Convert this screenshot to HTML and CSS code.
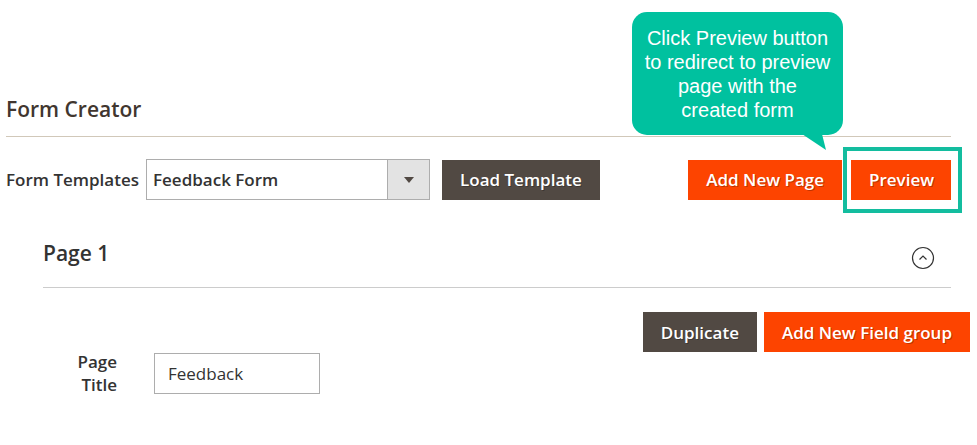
FILE: index.html
```html
<!DOCTYPE html>
<html lang="en">
<head>
  <meta charset="UTF-8" />
  <title>Form Creator</title>
  <link rel="stylesheet" href="styles.css">
</head>
<body>
  <div class="container">
    <h1 class="title">Form Creator</h1>

    <div class="toolbar">
      <label class="toolbar-label">Form Templates</label>
      <div class="select">
        <span class="select-value">Feedback Form</span>
        <span class="select-arrow"></span>
      </div>
      <button class="btn btn-dark">Load Template</button>
      <div class="spacer"></div>
      <button class="btn btn-orange">Add New Page</button>
      <div class="preview-wrap">
        <button class="btn btn-orange">Preview</button>
        <div class="highlight"></div>
      </div>
    </div>

    <section class="page-section">
      <div class="page-head">
        <h2>Page 1</h2>
        <svg class="collapse" width="24" height="24" viewBox="0 0 24 24">
          <circle cx="12" cy="12" r="10.5" fill="none" stroke="#333" stroke-width="1.2"/>
          <path d="M8.5 13.5 L12 10 L15.5 13.5" fill="none" stroke="#333" stroke-width="1.2"/>
        </svg>
      </div>

      <div class="page-actions">
        <button class="btn btn-dark">Duplicate</button>
        <button class="btn btn-orange">Add New Field group</button>
      </div>

      <div class="field">
        <label class="field-label">Page<br>Title</label>
        <input class="field-input" type="text" value="Feedback">
      </div>
    </section>
  </div>

  <div class="tip">
    Click Preview button<br>to redirect to preview<br>page with the<br>created form
    <svg class="tip-tail" width="30" height="20" viewBox="0 0 30 20">
      <polygon points="0,0 20,0 24,16" fill="#00c19f"/>
    </svg>
  </div>
</body>
</html>
```
FILE: styles.css
```css
* {
  margin: 0;
  padding: 0;
  box-sizing: border-box;
}
body {
  font-family: 'Open Sans', sans-serif;
  color: #333;
  background: #fff;
  width: 977px;
  height: 445px;
  overflow: hidden;
  position: relative;
}
.container {
  margin-left: 6px;
  width: 945px;
}
.title {
  font-size: 21px;
  font-weight: 600;
  line-height: 28px;
  color: #41362f;
  padding-top: 95px;
  padding-bottom: 13px;
  border-bottom: 1px solid #d1c8b9;
}
.toolbar {
  display: flex;
  align-items: center;
  margin-top: 22px;
  height: 41px;
}
.toolbar-label {
  font-size: 17px;
  font-weight: 600;
  color: #333;
  margin-right: 7px;
}
.select {
  display: flex;
  align-items: stretch;
  width: 284px;
  height: 41px;
  border: 1px solid #adadad;
  margin-right: 12px;
}
.select-value {
  flex: 1;
  display: flex;
  align-items: center;
  padding-left: 6px;
  font-size: 17px;
  font-weight: 600;
  color: #333;
}
.select-arrow {
  width: 42px;
  background: #e3e3e3;
  border-left: 1px solid #adadad;
  position: relative;
}
.select-arrow::after {
  content: "";
  position: absolute;
  left: 16px;
  top: 17px;
  border: 5px solid transparent;
  border-top: 6px solid #514943;
  border-bottom: 0;
}
.btn {
  font-family: 'Open Sans', sans-serif;
  font-size: 17px;
  font-weight: 600;
  color: #fff;
  border: 0;
  height: 40px;
  padding: 0 18px;
  text-shadow: 1px 1px 0 rgba(0, 0, 0, 0.25);
  cursor: pointer;
}
.btn-dark {
  background: #514943;
}
.btn-orange {
  background: #fd4400;
}
.spacer {
  flex: 1;
}
.preview-wrap {
  position: relative;
  margin-left: 9px;
}
.preview-wrap .btn {
  width: 100px;
  display: block;
}
.highlight {
  position: absolute;
  top: -13px;
  left: -8px;
  right: -11px;
  bottom: -13px;
  border: 4px solid #13bd9f;
}
.page-section {
  margin-left: 37px;
}
.page-head {
  display: flex;
  justify-content: space-between;
  align-items: flex-start;
  margin-top: 39px;
  padding-bottom: 17px;
  border-bottom: 1px solid #ccc;
}
.page-head h2 {
  font-size: 21px;
  font-weight: 600;
  line-height: 28px;
  color: #333;
}
.collapse {
  margin-top: 7px;
  margin-right: 16px;
}
.page-actions {
  display: flex;
  justify-content: flex-end;
  gap: 7px;
  margin-top: 24px;
  margin-right: -19px;
}
.field {
  display: flex;
  align-items: center;
  margin-top: -2px;
}
.field-label {
  width: 74px;
  text-align: right;
  font-size: 17px;
  font-weight: 600;
  line-height: 23px;
  color: #333;
  margin-right: 37px;
}
.field-input {
  width: 166px;
  height: 41px;
  border: 1px solid #adadad;
  padding-left: 13px;
  font-family: 'Open Sans', sans-serif;
  font-size: 17px;
  color: #333;
}
.tip {
  position: absolute;
  left: 632px;
  top: 12px;
  width: 211px;
  height: 123px;
  padding: 14px 0 0;
  background: #00c19f;
  border-radius: 15px;
  color: #fff;
  font-family: 'Liberation Sans', Arial, sans-serif;
  font-size: 20px;
  line-height: 24px;
  text-align: center;
}
.tip-tail {
  position: absolute;
  left: 170px;
  top: 122px;
}
```
